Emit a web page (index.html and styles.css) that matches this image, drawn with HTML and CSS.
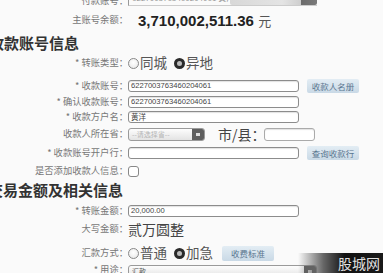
FILE: index.html
```html
<!DOCTYPE html>
<html lang="zh">
<head>
<meta charset="utf-8">
<link rel="stylesheet" href="styles.css">
</head>
<body>
<div class="page">
  <div class="row r0">
    <span class="lbl">付款账号：</span>
    <span class="paybox"><span class="paytxt">6227003763460204061 黄洋</span><span class="paybar"></span></span>
  </div>
  <div class="row rbal">
    <span class="lbl">主账号余额：</span>
    <span class="balance">3,710,002,511.36 <span class="yuan">元</span></span>
  </div>
  <h2 class="sec sec1">收款账号信息</h2>
  <div class="row rtype">
    <span class="lbl">* 转账类型：</span>
    <span class="opts">
      <span class="opt"><span class="radio"></span>同城</span>
      <span class="opt"><span class="radio on"></span>异地</span>
    </span>
  </div>
  <div class="row racct">
    <span class="lbl">* 收款账号：</span>
    <span class="input wide">6227003763460204061</span>
    <span class="btn">收款人名册</span>
  </div>
  <div class="row rconf">
    <span class="lbl">* 确认收款账号：</span>
    <span class="input wide">6227003763460204061</span>
  </div>
  <div class="row rname">
    <span class="lbl">* 收款方户名：</span>
    <span class="input wide">黄洋</span>
  </div>
  <div class="row rprov">
    <span class="lbl">收款人所在省：</span>
    <span class="select prov"><span class="seltxt">--请选择省--</span><span class="selbtn"></span></span>
    <span class="city">市/县：</span>
    <span class="input small"></span>
  </div>
  <div class="row rbank">
    <span class="lbl">* 收款账号开户行：</span>
    <span class="input wide"></span>
    <span class="btn">查询收款行</span>
  </div>
  <div class="row radd">
    <span class="lbl">是否添加收款人信息：</span>
    <span class="check"></span>
  </div>
  <h2 class="sec sec2">交易金额及相关信息</h2>
  <div class="row ramt">
    <span class="lbl">* 转账金额：</span>
    <span class="input wide">20,000.00</span>
  </div>
  <div class="row rupper">
    <span class="lbl">大写金额：</span>
    <span class="big">贰万圆整</span>
  </div>
  <div class="row rmeth">
    <span class="lbl">汇款方式：</span>
    <span class="opts">
      <span class="opt"><span class="radio"></span>普通</span>
      <span class="opt"><span class="radio on"></span>加急</span>
    </span>
    <span class="btn fee">收费标准</span>
  </div>
  <div class="row ruse">
    <span class="lbl">* 用途：</span>
    <span class="select use"><span class="seltxt dark">汇款</span><span class="selbtn"></span></span>
  </div>
</div>
<div class="mark">股城网</div>
</body>
</html>
```
FILE: styles.css
```css
html, body {
  margin: 0;
  padding: 0;
  width: 383px;
  height: 273px;
  overflow: hidden;
  background: #fafafa;
  font-family: "Noto Sans CJK SC", "Liberation Sans", sans-serif;
  color: #444;
  position: relative;
}

.page {
  display: flex;
  flex-direction: column;
  margin-top: -6px;
}

.row {
  display: flex;
  align-items: center;
  height: 14px;
}

.lbl {
  width: 128px;
  flex: none;
  text-align: right;
  font-size: 9.3px;
  color: #777;
  white-space: nowrap;
  line-height: 1;
}

.rbal { margin-top: 5px; }
.rtype { margin-top: 3px; }
.racct { margin-top: 9px; }
.rconf { margin-top: 2px; }
.rname { margin-top: 1px; }
.rprov { margin-top: 3px; }
.rbank { margin-top: 5px; }
.radd { margin-top: 4px; }
.ramt { margin-top: 4px; }
.rupper { margin-top: 4px; }
.rmeth { margin-top: 10px; }
.ruse { margin-top: 3px; }

.paybox {
  display: flex;
  align-items: flex-end;
  height: 11px;
  width: 188px;
  border-left: 1px solid #999;
  border-bottom: 1px solid #ccc;
  margin-top: -2px;
}
.paytxt {
  font-size: 8px;
  color: #999;
  width: 99px;
  padding-left: 3px;
  line-height: 8px;
  overflow: hidden;
  white-space: nowrap;
  align-self: flex-start;
}
.paybar {
  width: 88px;
  height: 7px;
  margin-left: auto;
  background: linear-gradient(to right, #d8d8d8 0, #e4e4e4 60%, #cfcfcf 81%, #6b6b6b 82%, #7a7a7a 100%);
  border-radius: 0 0 2px 2px;
}

.balance {
  margin-left: 10px;
  font-family: "Liberation Sans", sans-serif;
  font-weight: bold;
  font-size: 15px;
  color: #222;
  white-space: nowrap;
}
.yuan {
  font-family: "Noto Sans CJK SC", sans-serif;
  font-weight: normal;
  color: #555;
  font-size: 13px;
}

.sec {
  margin: 6px 0 0 -11px;
  height: 20px;
  font-size: 15px;
  line-height: 20px;
  font-weight: bold;
  color: #333;
}
.sec2 { margin-top: 2px; margin-left: -12px; }

.opts {
  display: flex;
  align-items: center;
  gap: 7px;
}
.opt {
  display: flex;
  align-items: center;
  font-size: 13.5px;
  color: #555;
  gap: 1px;
  line-height: 1;
  white-space: nowrap;
}
.radio {
  width: 9px;
  height: 9px;
  border-radius: 50%;
  border: 1px solid #888;
  background: radial-gradient(circle at 50% 40%, #fff, #e6e6e6);
  flex: none;
}
.radio.on {
  width: 5px;
  height: 5px;
  border: 3px solid #2a2a2a;
  background: #bbb;
}

.input {
  height: 10px;
  border: 1px solid #8c8c8c;
  border-radius: 3px;
  background: #fff;
  font-family: "Liberation Sans", sans-serif;
  font-size: 7.6px;
  line-height: 10px;
  color: #444;
  padding-left: 2px;
  box-shadow: inset 0 1px 1px rgba(0,0,0,0.12);
  white-space: nowrap;
  overflow: hidden;
}
.input.wide { width: 167px; }
.input.small { width: 47px; height: 11px; border-color: #aaa; }
.rname .input { font-family: "Noto Sans CJK SC", sans-serif; font-size: 7.5px; }

.btn {
  margin-left: 8px;
  width: 52px;
  height: 14px;
  line-height: 14px;
  text-align: center;
  font-size: 8.5px;
  color: #5a7690;
  background: linear-gradient(#e3edf4, #c9d9e6);
  border-radius: 2px;
  white-space: nowrap;
}
.btn.fee { margin-left: 9px; height: 15px; line-height: 15px; }

.select {
  display: flex;
  align-items: stretch;
  height: 11px;
  border: 1px solid #9a9a9a;
  border-radius: 3px;
  overflow: hidden;
  background: linear-gradient(#fdfdfd, #e3e3e3);
}
.select.prov { width: 75px; }
.select.use { width: 187px; margin-top: 2px; }
.seltxt {
  flex: 1;
  font-size: 7px;
  line-height: 11px;
  color: #b5b5b5;
  padding-left: 3px;
  white-space: nowrap;
}
.seltxt.dark { color: #555; }
.selbtn {
  width: 12px;
  background: #5e5e5e;
  position: relative;
}
.selbtn::after {
  content: "";
  position: absolute;
  left: 4px;
  top: 4px;
  width: 4px;
  height: 3px;
  background: #ddd;
}

.city {
  margin-left: 13px;
  font-size: 14px;
  color: #444;
  width: 46px;
  white-space: nowrap;
  line-height: 1;
}

.check {
  width: 9px;
  height: 9px;
  border: 1px solid #888;
  border-radius: 3px;
  background: #fff;
}

.big {
  font-size: 14px;
  color: #444;
  line-height: 1;
  white-space: nowrap;
}

.mark {
  position: absolute;
  right: 0;
  bottom: 0;
  width: 85px;
  height: 20px;
  padding-right: 3px;
  box-sizing: border-box;
  text-align: right;
  font-size: 14px;
  line-height: 20px;
  color: #e0e0e0;
  background: linear-gradient(to right, rgba(255,255,255,0) 0, #666 30%, #111 55%, #1a1a1a 100%);
}
```
